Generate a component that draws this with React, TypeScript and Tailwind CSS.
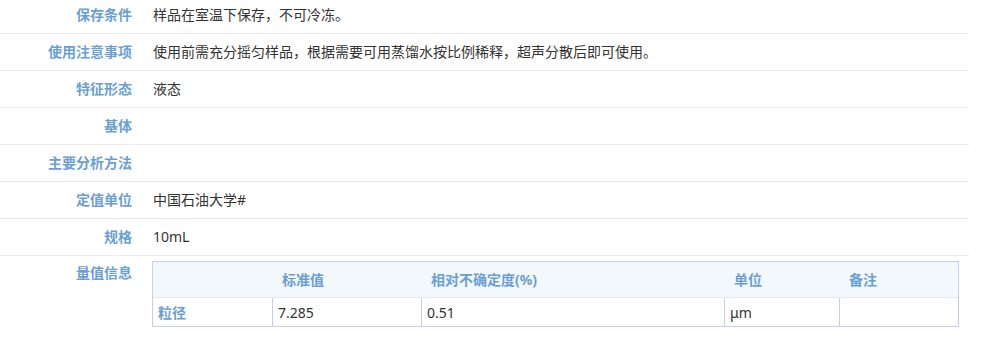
import React from 'react';

const rows: { label: string; value: string }[] = [
  { label: '保存条件', value: '样品在室温下保存，不可冷冻。' },
  { label: '使用注意事项', value: '使用前需充分摇匀样品，根据需要可用蒸馏水按比例稀释，超声分散后即可使用。' },
  { label: '特征形态', value: '液态' },
  { label: '基体', value: '' },
  { label: '主要分析方法', value: '' },
  { label: '定值单位', value: '中国石油大学#' },
  { label: '规格', value: '10mL' },
];

const font = { fontFamily: '"Noto Sans", "Noto Sans CJK SC", sans-serif' };

const App: React.FC = () => {
  return (
    <div className="w-[1008px] h-[352px] overflow-hidden bg-white text-[14px] text-[#333]" style={font}>
      <div className="w-[969px] -mt-[3px]">
        {/* 基本信息行 */}
        {rows.map((r) => (
          <div key={r.label} className="flex h-[37px] border-b border-[#ebebeb] leading-[36px]">
            <div className="w-[132px] shrink-0 text-right font-bold text-[#6a9fd3]">{r.label}</div>
            <div className="pl-[21px]">{r.value}</div>
          </div>
        ))}

        {/* 量值信息 */}
        <div className="flex">
          <div className="w-[132px] shrink-0 text-right font-bold text-[#6a9fd3] leading-[34px]">量值信息</div>
          <div className="pl-[20px] pt-[5px]">
            <div className="w-[807px] border border-[#c6cdf4]">
              <div className="flex h-[36px] items-center bg-[#f3f8fd] border-b border-[#e6e9ee] font-bold text-[#6a9fd3]">
                <div className="w-[119px]" />
                <div className="w-[149px] pl-[10px]">标准值</div>
                <div className="w-[303px] pl-[10px]">相对不确定度(%)</div>
                <div className="w-[115px] pl-[10px]">单位</div>
                <div className="flex-1 pl-[10px]">备注</div>
              </div>
              <div className="flex h-[28px] items-center">
                <div className="w-[119px] h-full flex items-center pl-[5px] font-bold text-[#6a9fd3]">粒径</div>
                <div className="w-[149px] h-full flex items-center pl-[5px] border-l border-[#c6cdf4]">7.285</div>
                <div className="w-[303px] h-full flex items-center pl-[5px] border-l border-[#c6cdf4]">0.51</div>
                <div className="w-[115px] h-full flex items-center pl-[5px] border-l border-[#c6cdf4]">μm</div>
                <div className="flex-1 h-full border-l border-[#c6cdf4]" />
              </div>
            </div>
          </div>
        </div>
      </div>
    </div>
  );
};

export default App;
